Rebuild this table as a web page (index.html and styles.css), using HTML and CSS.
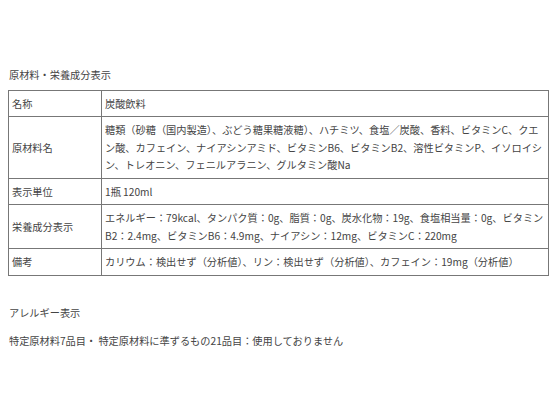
FILE: index.html
```html
<!DOCTYPE html>
<html lang="ja">
<head>
<meta charset="utf-8">
<title>原材料・栄養成分表示</title>
<link rel="stylesheet" href="styles.css">
</head>
<body>
<div class="page">
  <p class="heading">原材料・栄養成分表示</p>
  <table class="spec">
    <tr><th>名称</th><td>炭酸飲料</td></tr>
    <tr><th>原材料名</th><td>糖類（砂糖（国内製造）、ぶどう糖果糖液糖）、ハチミツ、食塩／炭酸、香料、ビタミンC、クエン酸、カフェイン、ナイアシンアミド、ビタミンB6、ビタミンB2、溶性ビタミンP、イソロイシン、トレオニン、フェニルアラニン、グルタミン酸Na</td></tr>
    <tr><th>表示単位</th><td>1瓶 120ml</td></tr>
    <tr><th>栄養成分表示</th><td>エネルギー：79kcal、タンパク質：0g、脂質：0g、炭水化物：19g、食塩相当量：0g、ビタミンB2：2.4mg、ビタミンB6：4.9mg、ナイアシン：12mg、ビタミンC：220mg</td></tr>
    <tr><th>備考</th><td>カリウム：検出せず（分析値）、リン：検出せず（分析値）、カフェイン：19mg（分析値）</td></tr>
  </table>
  <p class="heading allergy">アレルギー表示</p>
  <p class="note">特定原材料7品目・ 特定原材料に準ずるもの21品目：使用しておりません</p>
</div>
</body>
</html>
```

FILE: styles.css
```css
html, body {
  margin: 0;
  padding: 0;
  background: #ffffff;
}
body {
  font-family: "Noto Sans CJK JP", "Noto Sans", sans-serif;
  font-size: 10.2px;
  line-height: 17.5px;
  color: #444444;
}
.page {
  padding: 66px 8px 0 8px;
}
.heading {
  margin: 0 0 6px 1px;
}
.spec {
  width: 541px;
  border-collapse: collapse;
}
.spec th,
.spec td {
  border: 1px solid #777777;
  padding: 4px 3px;
  text-align: left;
  font-weight: normal;
  vertical-align: middle;
}
.spec th {
  width: 86px;
}
.allergy {
  margin: 28px 0 11px 1px;
}
.note {
  margin: 0 0 0 1px;
}
```
